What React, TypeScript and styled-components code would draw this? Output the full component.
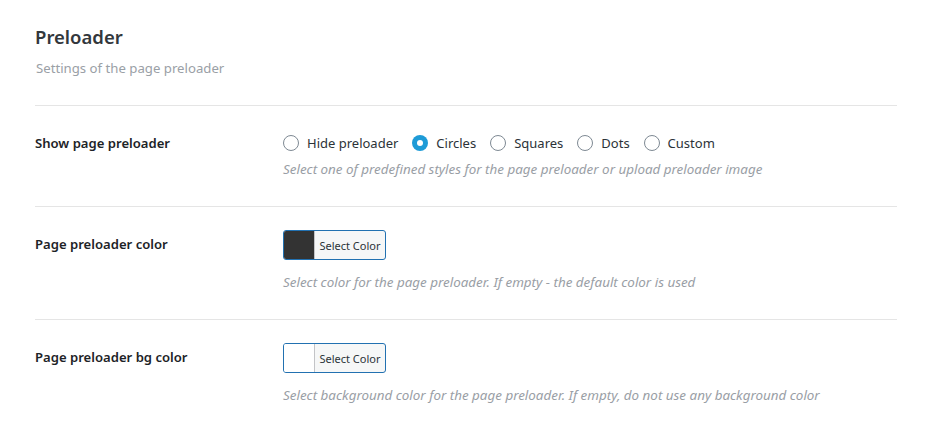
import React from "react";
import styled, { createGlobalStyle } from "styled-components";

const Global = createGlobalStyle`
  html, body { margin: 0; padding: 0; background: #ffffff; }
  body { font-family: "Noto Sans", "Open Sans", sans-serif; color: #1d2327; }
`;

const Page = styled.div`
  padding: 24px 34px 0 35px;
  width: 862px;
`;

const Header = styled.header`
  display: flex;
  flex-direction: column;
  padding-bottom: 27px;
  border-bottom: 1px solid #e5e5e5;
`;

const Title = styled.h2`
  margin: 0;
  font-size: 18.5px;
  line-height: 26px;
  font-weight: 600;
  color: #32373c;
`;

const Subtitle = styled.p`
  margin: 8px 0 0 1px;
  font-size: 13.2px;
  line-height: 20px;
  color: #9aa0a6;
`;

const Row = styled.div<{ $last?: boolean }>`
  display: grid;
  grid-template-columns: 248px 1fr;
  align-items: start;
  padding: 23px 0 27px;
  border-bottom: ${(p) => (p.$last ? "none" : "1px solid #e5e5e5")};
`;

const Label = styled.div<{ $lh: number }>`
  font-size: 13.1px;
  font-weight: 600;
  line-height: ${(p) => p.$lh}px;
  color: #1d2327;
`;

const Control = styled.div`
  display: flex;
  flex-direction: column;
`;

const RadioGroup = styled.div`
  display: flex;
  align-items: center;
  height: 28px;
  gap: 14px;
`;

const RadioOption = styled.label`
  display: flex;
  align-items: center;
  gap: 8px;
  font-size: 13px;
  color: #2c3338;
`;

const RadioCircle = styled.span<{ $checked?: boolean }>`
  box-sizing: border-box;
  width: 16px;
  height: 16px;
  border-radius: 50%;
  border: ${(p) => (p.$checked ? "none" : "1.5px solid #7e8993")};
  background: ${(p) => (p.$checked ? "#1e9bd7" : "#fff")};
  display: flex;
  align-items: center;
  justify-content: center;
  &::after {
    content: "";
    display: ${(p) => (p.$checked ? "block" : "none")};
    width: 6px;
    height: 6px;
    border-radius: 50%;
    background: #fff;
  }
`;

const Desc = styled.p<{ $mt: number }>`
  margin: ${(p) => p.$mt}px 0 0;
  font-size: 13.4px;
  line-height: 20px;
  font-style: italic;
  color: #999ea5;
`;

const ColorButton = styled.button`
  box-sizing: border-box;
  display: flex;
  align-items: stretch;
  height: 30px;
  width: 103px;
  padding: 0;
  border: 1px solid #2271b1;
  border-radius: 3px;
  background: #f6f7f7;
  overflow: hidden;
  cursor: pointer;
  font-family: inherit;
`;

const Swatch = styled.span<{ $color: string }>`
  width: 30px;
  background: ${(p) => p.$color};
  border-right: 1px solid #c3c4c7;
`;

const ButtonText = styled.span`
  flex: 1;
  display: flex;
  align-items: center;
  justify-content: center;
  font-size: 11px;
  color: #2c3338;
`;

const options = ["Hide preloader", "Circles", "Squares", "Dots", "Custom"];

export default function App() {
  return (
    <>
      <Global />
      <Page>
        <Header>
          <Title>Preloader</Title>
          <Subtitle>Settings of the page preloader</Subtitle>
        </Header>
        <Row>
          <Label $lh={28}>Show page preloader</Label>
          <Control>
            <RadioGroup>
              {options.map((o) => (
                <RadioOption key={o}>
                  <RadioCircle $checked={o === "Circles"} />
                  {o}
                </RadioOption>
              ))}
            </RadioGroup>
            <Desc $mt={2}>
              Select one of predefined styles for the page preloader or upload preloader image
            </Desc>
          </Control>
        </Row>
        <Row>
          <Label $lh={29}>Page preloader color</Label>
          <Control>
            <ColorButton>
              <Swatch $color="#333333" />
              <ButtonText>Select Color</ButtonText>
            </ColorButton>
            <Desc $mt={12}>
              Select color for the page preloader. If empty - the default color is used
            </Desc>
          </Control>
        </Row>
        <Row $last>
          <Label $lh={29}>Page preloader bg color</Label>
          <Control>
            <ColorButton>
              <Swatch $color="#ffffff" />
              <ButtonText>Select Color</ButtonText>
            </ColorButton>
            <Desc $mt={12}>
              Select background color for the page preloader. If empty, do not use any background color
            </Desc>
          </Control>
        </Row>
      </Page>
    </>
  );
}
